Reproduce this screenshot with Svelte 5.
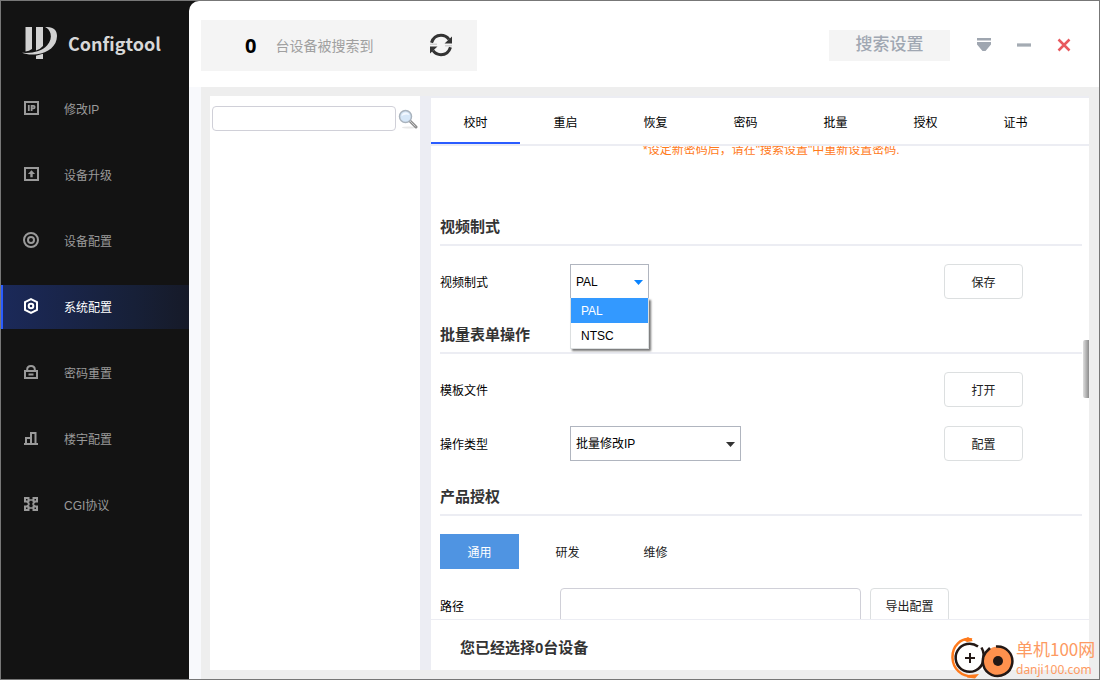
<script lang="ts">
  const navItems = [
    { id: "ip", label: "修改IP" },
    { id: "upgrade", label: "设备升级" },
    { id: "device", label: "设备配置" },
    { id: "system", label: "系统配置" },
    { id: "password", label: "密码重置" },
    { id: "building", label: "楼宇配置" },
    { id: "cgi", label: "CGI协议" },
  ];
  const tabs = ["校时", "重启", "恢复", "密码", "批量", "授权", "证书"];
  const licenseTypes = ["通用", "研发", "维修"];
  const videoStandards = ["PAL", "NTSC"];

  let activeNav = $state("system");
  let activeTab = $state("校时");
  let licenseType = $state("通用");
  let standard = $state("PAL");
  let standardOpen = $state(true);
  let keyword = $state("");
  let path = $state("");
  let found = $state(0);
  let selected = $state(0);

  function openStandard(e: Event) {
    e.preventDefault();
    standardOpen = !standardOpen;
  }

  function pickStandard(value: string) {
    standard = value;
    standardOpen = false;
  }
</script>

<div class="app">
  <aside class="sidebar">
    <div class="brand">
      <svg width="36" height="34" viewBox="0 0 36 34" fill="#d2d2d2">
        <path d="M3.500 1H10v22q-3 2-6.500 2.500z" />
        <path d="M14 1h7v19q-3 3.500-7 4.500z" />
        <path d="M23 1h2c7 0 10 3.500 10 9C35 20 26 27 15 28.300 9 29 4 28.500 0 26.800c11 .8 20-1.800 25-7.300 3.500-4 4.500-8 3.500-12C27.500 4 25.500 2 23 1z" />
        <path d="M14 29.800l7-2V33h-7z" />
      </svg>
      <span>Configtool</span>
    </div>
    <nav>
      {#each navItems as item (item.id)}
        <button class="nav-item" class:active={activeNav === item.id} onclick={() => (activeNav = item.id)}>
          <svg width="16" height="16" viewBox="0 0 16 16" fill="none" stroke="currentColor" stroke-width="2">
            {#if item.id === "ip"}
              <rect x="2" y="2" width="13" height="12" />
              <path d="M5.800 5v6M8.600 11V5.800h1.800q1.300 0 1.300 1.300t-1.300 1.300H8.600" stroke-width="1.800" />
            {:else if item.id === "upgrade"}
              <rect x="2" y="2" width="13" height="12" />
              <path d="M8.500 4.200l3.600 3.800H9.700v3.200H7.300V8H4.900z" fill="currentColor" stroke="none" />
            {:else if item.id === "device"}
              <circle cx="8" cy="8" r="7" />
              <circle cx="8" cy="8" r="3" />
            {:else if item.id === "system"}
              <path d="M8 1.200l6 3v7.600l-6 3-6-3V4.200z" />
              <circle cx="8" cy="8" r="2.300" />
            {:else if item.id === "password"}
              <path d="M2 7h12v7H2zM4.200 7V5.500Q4.200 2 8 2t3.800 3.500V7M5.500 10.500h5" />
            {:else if item.id === "building"}
              <path d="M1 14h14M3 14V8h5M8 14V3h4.500v11" />
            {:else}
              <path d="M2 2h3.500v3.500H2zM10.500 2H14v3.500h-3.500zM2 10.500h3.500V14H2zM10.500 10.500H14V14h-3.500z" />
              <path d="M5.500 4l5 0M5.500 12h5M4 5.500L6 8l-2 2.500M12 5.500L10 8l2 2.500" stroke-width="1.600" />
            {/if}
          </svg>
          <span>{item.label}</span>
        </button>
      {/each}
    </nav>
  </aside>

  <main>
    <header>
      <div class="found">
        <strong>{found}</strong>
        <span>台设备被搜索到</span>
        <button class="icon-btn" aria-label="刷新" onclick={() => (found = 0)}>
          <svg width="24" height="24" viewBox="0 0 24 24">
            <path d="M2.500 9.800C4 5 7.800 2.300 12 2.300c3.300 0 6 1.400 8 4M21.500 14.200C20 19 16.200 21.700 12 21.700c-3.300 0-6-1.400-8-4" fill="none" stroke="#333" stroke-width="3" />
            <path d="M23 3.500v7h-7.500zM1 20.500v-7h7.500z" fill="#333" />
            <path d="M1 10.500h7v1.500H1zM16 12h7v1.500h-7z" fill="#d0d0d0" />
          </svg>
        </button>
      </div>
      <button class="search-setting">搜索设置</button>
      <div class="window-btns">
        <button class="icon-btn" aria-label="菜单">
          <svg width="16" height="16" viewBox="0 0 16 16" fill="#9fa6b0">
            <path d="M1 1h14v2.500H1zM1 5h14v2.500L9.500 14h-3L1 7.500z" />
          </svg>
        </button>
        <button class="icon-btn" aria-label="最小化">
          <svg width="16" height="16" viewBox="0 0 16 16">
            <path d="M1 6h14v4H1z" fill="#c6cbd0" />
            <path d="M1 7h14v2H1z" fill="#a4abb3" />
          </svg>
        </button>
        <button class="icon-btn" aria-label="关闭">
          <svg width="16" height="16" viewBox="0 0 16 16" stroke="#e85a5f" stroke-width="2.500">
            <path d="M2.500 2.500l11 11M13.500 2.500l-11 11" />
          </svg>
        </button>
      </div>
    </header>

    <div class="body">
      <div class="workspace">
        <section class="devices">
          <div class="device-search">
            <input type="text" aria-label="搜索设备" bind:value={keyword} />
            <button class="icon-btn" aria-label="搜索">
              <svg width="20" height="20" viewBox="0 0 20 20">
                <ellipse cx="11" cy="18.500" rx="7" ry="1" fill="#e8e8e8" />
                <path d="M12 12l6 6" stroke="#8c8c8c" stroke-width="3" stroke-linecap="round" />
                <path d="M12 12l5.500 5.500" stroke="#d0d0d0" stroke-width="1" />
                <circle cx="7.500" cy="7.500" r="6" fill="#d6e7f8" stroke="#a9b3bd" stroke-width="1.500" />
                <path d="M3.500 7q1-4 5-3.500 2.500.500 3 2.500-4-1.500-8 1z" fill="#f4f9ff" />
              </svg>
            </button>
          </div>
        </section>

        <section class="panel">
          <div class="tabs" role="tablist">
            {#each tabs as tab}
              <button role="tab" class="tab" class:active={activeTab === tab} aria-selected={activeTab === tab} onclick={() => (activeTab = tab)}>
                {tab}
              </button>
            {/each}
          </div>

          <div class="scroll">
            <div class="content">
              <p class="notice">*设定新密码后，请在"搜索设置"中重新设置密码.</p>

              <h2>视频制式</h2>
              <div class="rows">
                <div class="row">
                  <label for="standard">视频制式</label>
                  <div class="select small">
                    <select id="standard" bind:value={standard} onmousedown={openStandard}>
                      {#each videoStandards as value}
                        <option {value}>{value}</option>
                      {/each}
                    </select>
                    <svg class="arrow blue" width="9" height="5" viewBox="0 0 9 5"><path d="M0 0h9L4.500 5z" /></svg>
                    {#if standardOpen}
                      <div class="menu" role="listbox">
                        {#each videoStandards as value}
                          <button role="option" class:active={standard === value} aria-selected={standard === value} onclick={() => pickStandard(value)}>
                            {value}
                          </button>
                        {/each}
                      </div>
                    {/if}
                  </div>
                  <button class="btn end">保存</button>
                </div>
              </div>

              <h2>批量表单操作</h2>
              <div class="rows">
                <div class="row">
                  <span class="name">模板文件</span>
                  <button class="btn end">打开</button>
                </div>
                <div class="row">
                  <label for="operation">操作类型</label>
                  <div class="select">
                    <select id="operation">
                      <option>批量修改IP</option>
                    </select>
                    <svg class="arrow" width="9" height="5" viewBox="0 0 9 5"><path d="M0 0h9L4.500 5z" /></svg>
                  </div>
                  <button class="btn end">配置</button>
                </div>
              </div>

              <h2>产品授权</h2>
              <div class="rows">
                <div class="row license">
                  {#each licenseTypes as type}
                    <button class:active={licenseType === type} onclick={() => (licenseType = type)}>{type}</button>
                  {/each}
                </div>
                <div class="row path">
                  <label for="path">路径</label>
                  <input id="path" type="text" bind:value={path} />
                  <button class="btn">导出配置</button>
                </div>
              </div>
            </div>
            <div class="thumb"></div>
          </div>

          <footer>您已经选择{selected}台设备</footer>
        </section>
      </div>
    </div>
  </main>

  <div class="watermark">
    <svg width="64" height="42" viewBox="0 0 64 42" fill="none">
      <path d="M21 2.500C10 0 1 9 1.500 21c.5 11 9 18.500 20 18.500" stroke="#ff7a1c" stroke-width="2.500" />
      <path d="M12 3l5-3 5 4-6 1zM17 38l11-1-4 4.500-8-1z" fill="#ff7a1c" />
      <circle cx="19" cy="21" r="15" fill="#fff" />
      <path d="M27 9.500A14 14 0 1 0 32 25c1-4 1-10-1.500-14.500" stroke="#231815" stroke-width="2.500" />
      <path d="M19 16v10M14 21h10" stroke="#231815" stroke-width="2" />
      <circle cx="47" cy="24" r="14.500" fill="#ff914d" />
      <path d="M45 9.500A14.800 14.800 0 1 1 35 15l4-4" stroke="#231815" stroke-width="2.500" />
      <circle cx="47" cy="24" r="5" fill="#231815" />
    </svg>
    <div class="site">
      <span class="site-name">单机100网</span>
      <span class="site-url">danji100.com</span>
    </div>
  </div>
</div>

<style>
  :global(body) {
    margin: 0;
  }
  .app {
    position: relative;
    display: flex;
    height: 100vh;
    box-sizing: border-box;
    border: 1px solid #777;
    background: #131313;
    overflow: hidden;
    font-family: "Liberation Sans", "Noto Sans CJK SC", sans-serif;
    font-size: 12px;
    color: #000;
  }
  button,
  input,
  select {
    box-sizing: border-box;
    margin: 0;
    font: inherit;
    color: inherit;
  }
  button {
    padding: 0;
    border: none;
    background: none;
  }
  svg {
    display: block;
    flex-shrink: 0;
  }

  .sidebar {
    width: 188px;
    flex-shrink: 0;
  }
  .brand {
    display: flex;
    align-items: center;
    gap: 10px;
    height: 86px;
    padding: 0 0 2px 21px;
    box-sizing: border-box;
    font-family: "Noto Sans CJK SC", sans-serif;
    font-size: 18px;
    font-weight: 700;
    color: #d8d8d8;
  }
  nav {
    display: flex;
    flex-direction: column;
    gap: 22px;
  }
  .nav-item {
    display: flex;
    align-items: center;
    gap: 25px;
    height: 44px;
    padding: 0 0 2px 20px;
    border-left: 2px solid transparent;
    color: #9a9a9a;
  }
  .nav-item.active {
    border-left-color: #2a5cff;
    background: linear-gradient(90deg, #1b2959, #172038 70%, #161a28);
    color: #fff;
  }

  main {
    flex: 1;
    min-width: 0;
    display: flex;
    flex-direction: column;
    background: #fff;
    border-top-left-radius: 10px;
    overflow: hidden;
  }
  header {
    display: flex;
    align-items: center;
    height: 86px;
    flex-shrink: 0;
    box-sizing: border-box;
    padding: 2px 27px 0 12px;
  }
  .found {
    display: flex;
    align-items: center;
    width: 276px;
    height: 51px;
    box-sizing: border-box;
    padding: 0 24px 0 44px;
    background: #f4f4f4;
  }
  .found strong {
    font-family: "Open Sans", sans-serif;
    font-size: 20px;
  }
  .found span {
    margin-left: 19px;
    font-size: 14px;
    color: #a0a0a0;
  }
  .found .icon-btn {
    margin-left: auto;
  }
  .search-setting {
    width: 121px;
    height: 31px;
    margin-left: auto;
    background: #f4f4f4;
    font-size: 17px;
    font-weight: 500;
    line-height: 20px;
    color: #a0a7b2;
  }
  .window-btns {
    display: flex;
    gap: 24px;
    margin-left: 26px;
  }

  .body {
    flex: 1;
    min-height: 0;
    display: flex;
    padding: 9px 10px 9px 9px;
    border-left: 12px solid #f8f9fc;
    background: #eee;
  }
  .workspace {
    flex: 1;
    min-width: 0;
    display: flex;
    gap: 11px;
    background: #ecedf3;
  }
  .devices {
    width: 210px;
    flex-shrink: 0;
    background: #fff;
  }
  .device-search {
    display: flex;
    align-items: center;
    gap: 2px;
    padding: 10px 2px;
  }
  .device-search input {
    width: 184px;
    height: 25px;
    border: 1px solid #d0d0d8;
    border-radius: 4px;
    background: #fff;
  }

  .panel {
    flex: 1;
    min-width: 0;
    display: flex;
    flex-direction: column;
    margin-top: 2px;
    background: #fff;
  }
  .tabs {
    display: flex;
    gap: 1px;
    flex-shrink: 0;
    border-bottom: 2px solid #ecedf3;
  }
  .tab {
    width: 89px;
    height: 46px;
    border-top: 2px solid transparent;
    border-bottom: 2px solid transparent;
  }
  .tab.active {
    border-bottom-color: #2a5cff;
  }
  .scroll {
    position: relative;
    flex: 1;
    min-height: 0;
    overflow: hidden;
  }
  .content {
    margin-top: -6px;
    padding: 0 7px 0 9px;
  }
  .notice {
    margin: 0 0 57px 203px;
    line-height: 20px;
    color: #ff7a1a;
  }
  h2 {
    margin: 26px 0 0;
    padding-bottom: 7px;
    border-bottom: 2px solid #ecedf3;
    font-size: 15px;
    line-height: 20px;
    color: #333;
  }
  .rows {
    display: flex;
    flex-direction: column;
    gap: 19px;
    padding-top: 18px;
  }
  .row {
    display: flex;
    align-items: center;
    height: 35px;
    padding-right: 59px;
  }
  .row label,
  .row .name {
    width: 130px;
  }
  .btn {
    width: 79px;
    height: 35px;
    border: 1px solid #dcdfe0;
    border-radius: 4px;
    background: #fff;
    color: #222;
  }
  .btn.end {
    margin-left: auto;
  }
  .select {
    position: relative;
    width: 171px;
  }
  .select.small {
    width: 79px;
  }
  .select select {
    display: block;
    width: 100%;
    height: 35px;
    padding: 0 5px;
    border: 1px solid #b0b5bf;
    border-radius: 0;
    background: #fff;
    appearance: none;
  }
  .arrow {
    position: absolute;
    top: 16px;
    right: 6px;
    fill: #333;
    pointer-events: none;
  }
  .arrow.blue {
    fill: #0a84ff;
  }
  .menu {
    position: absolute;
    top: 34px;
    left: 0;
    z-index: 1;
    width: 100%;
    box-sizing: border-box;
    border: 1px solid #dcdfe0;
    border-top: none;
    background: #fff;
    box-shadow: 2px 2px 2px #777;
  }
  .menu button {
    display: block;
    width: 100%;
    height: 25px;
    padding-left: 10px;
    text-align: left;
  }
  .menu button.active {
    background: #3399ff;
    color: #fff;
  }
  .license {
    gap: 9px;
  }
  .license button {
    width: 79px;
    height: 35px;
    color: #222;
  }
  .license button.active {
    background: #4f94e2;
    color: #fff;
  }
  .path label {
    width: 120px;
  }
  .path input {
    width: 301px;
    height: 35px;
    margin-right: 9px;
    border: 1px solid #d0d0d8;
    border-radius: 4px;
  }
  .thumb {
    position: absolute;
    top: 194px;
    right: 0;
    width: 6px;
    height: 58px;
    border-radius: 2px 0 0 2px;
    background: linear-gradient(90deg, #dedede, #8c8c8c);
  }
  footer {
    flex-shrink: 0;
    border-top: 1px solid #ecedf3;
    padding: 18px 29px 12px;
    font-size: 15px;
    font-weight: 700;
    line-height: 20px;
    color: #333;
  }

  .watermark {
    position: absolute;
    right: 0;
    bottom: 0;
    display: flex;
    gap: 1px;
  }
  .site {
    display: flex;
    flex-direction: column;
    gap: 2px;
    width: 83px;
    white-space: nowrap;
    color: #fd9a62;
  }
  .site-name {
    font-family: "Noto Sans CJK SC", sans-serif;
    font-size: 17px;
    line-height: 24px;
  }
  .site-url {
    font-family: "Noto Sans", sans-serif;
    font-size: 12px;
    line-height: 14px;
  }
</style>
